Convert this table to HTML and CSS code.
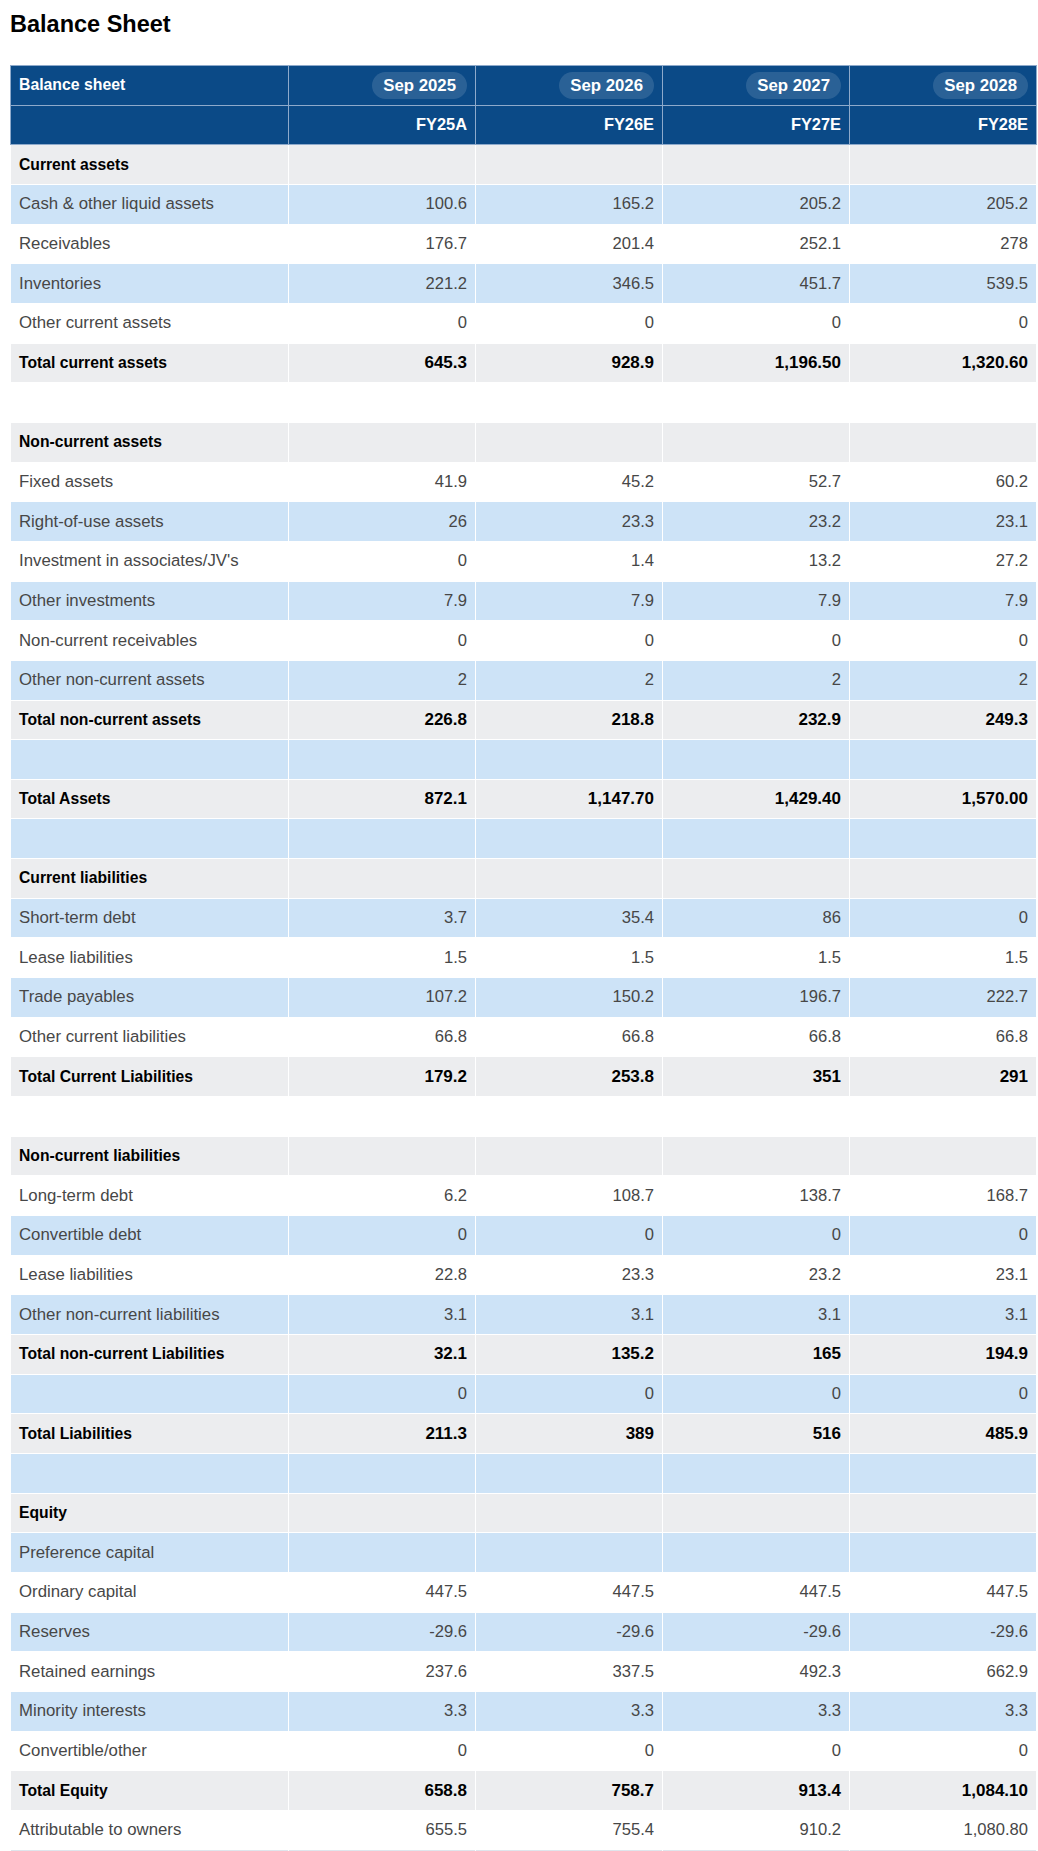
FILE: index.html
```html
<!DOCTYPE html>
<html lang="en">
<head>
<meta charset="utf-8">
<title>Balance Sheet</title>
<link rel="stylesheet" href="styles.css">
</head>
<body>
<div class="page">
  <h1 class="title">Balance Sheet</h1>
  <table class="bs">
    <colgroup>
      <col class="c-label"><col class="c-num"><col class="c-num"><col class="c-num"><col class="c-num">
    </colgroup>
    <thead>
      <tr class="h-period">
        <th class="lbl">Balance sheet</th>
        <th class="num"><span class="pill">Sep 2025</span></th>
        <th class="num"><span class="pill">Sep 2026</span></th>
        <th class="num"><span class="pill">Sep 2027</span></th>
        <th class="num"><span class="pill">Sep 2028</span></th>
      </tr>
      <tr class="h-fy">
        <th class="lbl"></th>
        <th class="num">FY25A</th>
        <th class="num">FY26E</th>
        <th class="num">FY27E</th>
        <th class="num">FY28E</th>
      </tr>
    </thead>
    <tbody>
      <tr class="r-gray sec"><td>Current assets</td><td></td><td></td><td></td><td></td></tr>
      <tr class="r-blue"><td>Cash &amp; other liquid assets</td><td>100.6</td><td>165.2</td><td>205.2</td><td>205.2</td></tr>
      <tr class="r-white"><td>Receivables</td><td>176.7</td><td>201.4</td><td>252.1</td><td>278</td></tr>
      <tr class="r-blue"><td>Inventories</td><td>221.2</td><td>346.5</td><td>451.7</td><td>539.5</td></tr>
      <tr class="r-white"><td>Other current assets</td><td>0</td><td>0</td><td>0</td><td>0</td></tr>
      <tr class="r-gray tot"><td>Total current assets</td><td>645.3</td><td>928.9</td><td>1,196.50</td><td>1,320.60</td></tr>
      <tr class="r-white"><td></td><td></td><td></td><td></td><td></td></tr>
      <tr class="r-gray sec"><td>Non-current assets</td><td></td><td></td><td></td><td></td></tr>
      <tr class="r-white"><td>Fixed assets</td><td>41.9</td><td>45.2</td><td>52.7</td><td>60.2</td></tr>
      <tr class="r-blue"><td>Right-of-use assets</td><td>26</td><td>23.3</td><td>23.2</td><td>23.1</td></tr>
      <tr class="r-white"><td>Investment in associates/JV's</td><td>0</td><td>1.4</td><td>13.2</td><td>27.2</td></tr>
      <tr class="r-blue"><td>Other investments</td><td>7.9</td><td>7.9</td><td>7.9</td><td>7.9</td></tr>
      <tr class="r-white"><td>Non-current receivables</td><td>0</td><td>0</td><td>0</td><td>0</td></tr>
      <tr class="r-blue"><td>Other non-current assets</td><td>2</td><td>2</td><td>2</td><td>2</td></tr>
      <tr class="r-gray tot"><td>Total non-current assets</td><td>226.8</td><td>218.8</td><td>232.9</td><td>249.3</td></tr>
      <tr class="r-blue"><td></td><td></td><td></td><td></td><td></td></tr>
      <tr class="r-gray tot"><td>Total Assets</td><td>872.1</td><td>1,147.70</td><td>1,429.40</td><td>1,570.00</td></tr>
      <tr class="r-blue"><td></td><td></td><td></td><td></td><td></td></tr>
      <tr class="r-gray sec"><td>Current liabilities</td><td></td><td></td><td></td><td></td></tr>
      <tr class="r-blue"><td>Short-term debt</td><td>3.7</td><td>35.4</td><td>86</td><td>0</td></tr>
      <tr class="r-white"><td>Lease liabilities</td><td>1.5</td><td>1.5</td><td>1.5</td><td>1.5</td></tr>
      <tr class="r-blue"><td>Trade payables</td><td>107.2</td><td>150.2</td><td>196.7</td><td>222.7</td></tr>
      <tr class="r-white"><td>Other current liabilities</td><td>66.8</td><td>66.8</td><td>66.8</td><td>66.8</td></tr>
      <tr class="r-gray tot"><td>Total Current Liabilities</td><td>179.2</td><td>253.8</td><td>351</td><td>291</td></tr>
      <tr class="r-white"><td></td><td></td><td></td><td></td><td></td></tr>
      <tr class="r-gray sec"><td>Non-current liabilities</td><td></td><td></td><td></td><td></td></tr>
      <tr class="r-white"><td>Long-term debt</td><td>6.2</td><td>108.7</td><td>138.7</td><td>168.7</td></tr>
      <tr class="r-blue"><td>Convertible debt</td><td>0</td><td>0</td><td>0</td><td>0</td></tr>
      <tr class="r-white"><td>Lease liabilities</td><td>22.8</td><td>23.3</td><td>23.2</td><td>23.1</td></tr>
      <tr class="r-blue"><td>Other non-current liabilities</td><td>3.1</td><td>3.1</td><td>3.1</td><td>3.1</td></tr>
      <tr class="r-gray tot"><td>Total non-current Liabilities</td><td>32.1</td><td>135.2</td><td>165</td><td>194.9</td></tr>
      <tr class="r-blue"><td></td><td>0</td><td>0</td><td>0</td><td>0</td></tr>
      <tr class="r-gray tot"><td>Total Liabilities</td><td>211.3</td><td>389</td><td>516</td><td>485.9</td></tr>
      <tr class="r-blue"><td></td><td></td><td></td><td></td><td></td></tr>
      <tr class="r-gray sec"><td>Equity</td><td></td><td></td><td></td><td></td></tr>
      <tr class="r-blue"><td>Preference capital</td><td></td><td></td><td></td><td></td></tr>
      <tr class="r-white"><td>Ordinary capital</td><td>447.5</td><td>447.5</td><td>447.5</td><td>447.5</td></tr>
      <tr class="r-blue"><td>Reserves</td><td>-29.6</td><td>-29.6</td><td>-29.6</td><td>-29.6</td></tr>
      <tr class="r-white"><td>Retained earnings</td><td>237.6</td><td>337.5</td><td>492.3</td><td>662.9</td></tr>
      <tr class="r-blue"><td>Minority interests</td><td>3.3</td><td>3.3</td><td>3.3</td><td>3.3</td></tr>
      <tr class="r-white"><td>Convertible/other</td><td>0</td><td>0</td><td>0</td><td>0</td></tr>
      <tr class="r-gray tot"><td>Total Equity</td><td>658.8</td><td>758.7</td><td>913.4</td><td>1,084.10</td></tr>
      <tr class="r-white"><td>Attributable to owners</td><td>655.5</td><td>755.4</td><td>910.2</td><td>1,080.80</td></tr>
    </tbody>
  </table>
</div>
</body>
</html>
```

FILE: styles.css
```css
html, body {
  margin: 0;
  padding: 0;
  background: #ffffff;
}

body {
  font-family: "Liberation Sans", Arial, Helvetica, sans-serif;
  color: #333333;
}

.page {
  padding: 11px 1px 0 10px;
}

.title {
  margin: 0 0 28px 0;
  font-size: 23.5px;
  line-height: 26px;
  font-weight: 700;
  color: #000000;
}

.bs {
  width: 1027px;
  border-collapse: collapse;
  table-layout: fixed;
  border: 1px solid #dfe5ec;
}

.c-label { width: 278px; }
.c-num { width: 187px; }

.bs th,
.bs td {
  height: 39.67px;
  box-sizing: border-box;
  padding: 0 8px;
  vertical-align: middle;
  white-space: nowrap;
}

/* header */
.bs thead th {
  background: #0b4a87;
  color: #ffffff;
  font-weight: 700;
  border: 1px solid #8eaacb;
}

.bs thead th.lbl {
  text-align: left;
  font-size: 15.8px;
}

.bs thead th.num {
  text-align: right;
  font-size: 16.4px;
}

.pill {
  display: inline-block;
  padding: 0 11px;
  height: 27px;
  line-height: 27px;
  border-radius: 14px;
  background: rgba(255, 255, 255, 0.13);
  font-size: 16.8px;
}

/* body */
.bs tbody td {
  border-left: 1px solid #ffffff;
  border-right: 1px solid #ffffff;
  border-top: 1px solid #ffffff;
  font-size: 16.6px;
  color: #474747;
  text-align: right;
}

.bs tbody td:first-child {
  text-align: left;
  font-size: 16.8px;
}

.bs tbody .r-gray td { background: #ecedef; }
.bs tbody .r-blue td { background: #cde3f7; }
.bs tbody .r-white td { background: #ffffff; }

.bs tbody .sec td,
.bs tbody .tot td {
  font-weight: 700;
  color: #000000;
  font-size: 17px;
}

.bs tbody .sec td:first-child,
.bs tbody .tot td:first-child {
  font-size: 15.7px;
}
```
